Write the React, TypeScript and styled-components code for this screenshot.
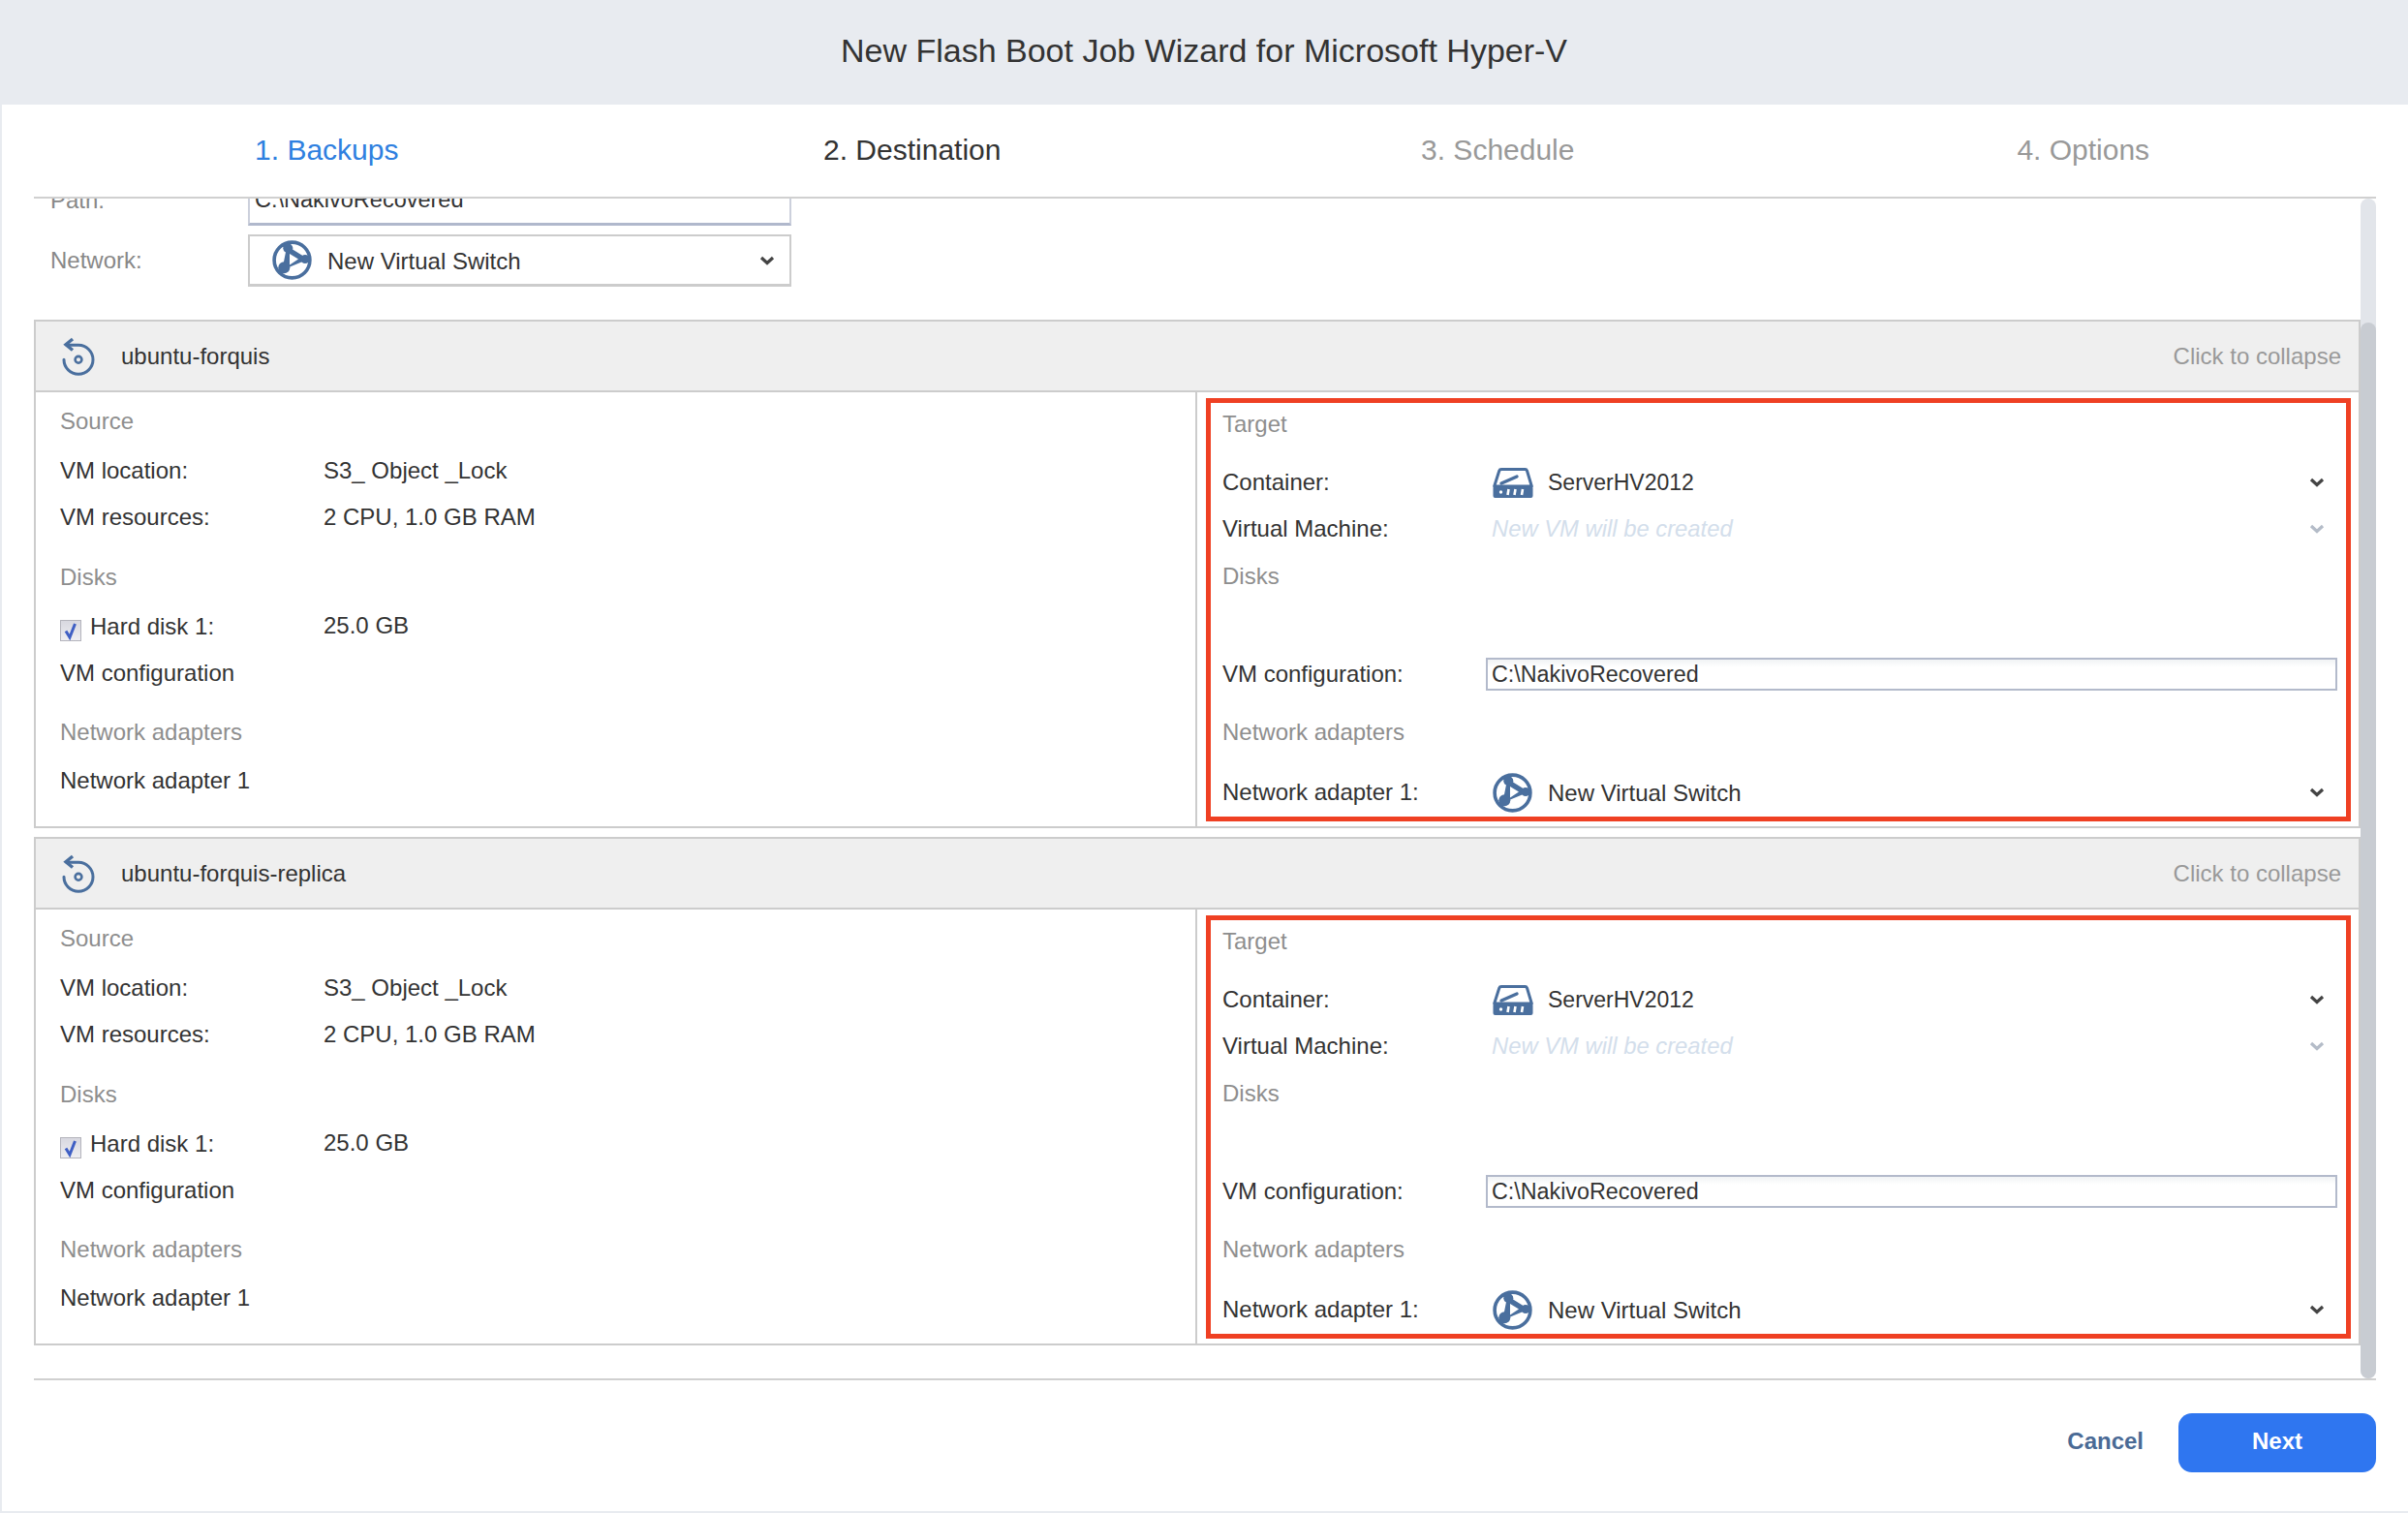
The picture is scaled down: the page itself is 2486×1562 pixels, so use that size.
import React from "react";
import styled, { createGlobalStyle } from "styled-components";

const Global = createGlobalStyle`
  html, body { margin: 0; padding: 0; background: #fff; }
  body { font-family: "Liberation Sans", Arial, sans-serif; color: #333; }
`;

const Page = styled.div`
  width: 2486px;
  height: 1562px;
  box-sizing: border-box;
  display: flex;
  flex-direction: column;
  overflow: hidden;
  border-left: 2px solid #e8ebf0;
  border-bottom: 2px solid #e8ebf0;
  background: #fff;
`;
const TitleBar = styled.header`
  height: 108px;
  margin-left: -2px;
  background: #e8ebf0;
  display: flex;
  align-items: center;
  justify-content: center;
  padding-bottom: 3px;
  box-sizing: border-box;
  font-size: 34px;
  color: #333;
  flex: none;
`;
const Main = styled.div`
  flex: 1;
  display: flex;
  flex-direction: column;
  padding: 0 33px 0 33px;
  min-height: 0;
`;
const Tabs = styled.nav`
  height: 97px;
  flex: none;
  box-sizing: border-box;
  display: grid;
  grid-template-columns: repeat(4, 1fr);
  align-items: center;
  border-bottom: 2px solid #d0d0d0;
`;
const Tab = styled.div<{ $state: "on" | "next" | "off" }>`
  text-align: center;
  font-size: 30px;
  padding-bottom: 1px;
  color: ${(p) => (p.$state === "on" ? "#2f80e0" : p.$state === "next" ? "#333" : "#999")};
`;
const Scroller = styled.div`
  position: relative;
  height: 1218px;
  flex: none;
  overflow: hidden;
  padding-right: 16px;
`;
const ScrollInner = styled.div`
  margin-top: -15px;
`;
const Track = styled.div`
  position: absolute;
  top: 0;
  right: 0;
  bottom: 0;
  width: 16px;
  background: #e2e5ea;
  border-radius: 8px;
`;
const Thumb = styled.div`
  position: absolute;
  top: 128px;
  right: 0;
  bottom: 0;
  width: 16px;
  background: #c8ccd2;
  border-radius: 8px;
`;
const FormRow = styled.div`
  display: grid;
  grid-template-columns: 204px 561px;
  align-items: center;
  padding-left: 17px;
`;
const FormLabel = styled.div<{ $up?: number }>`
  font-size: 24px;
  color: #888;
  margin-top: ${(p) => -(p.$up || 0)}px;
`;
const PathBox = styled.div`
  height: 43px;
  box-sizing: border-box;
  border: 2px solid #ccd0dc;
  border-bottom: 3px solid #b0b8cc;
  padding: 0 0 0 5px;
  font-size: 23.5px;
  line-height: 29px;
  color: #333;
  margin-bottom: 9px;
`;
const SelectBox = styled.div`
  height: 54px;
  box-sizing: border-box;
  border: 2px solid #ccc;
  border-bottom-width: 3px;
  display: flex;
  align-items: center;
  padding: 0 15px 0 23px;
  gap: 16px;
  font-size: 24px;
  margin-bottom: 34px;
`;
const SelectText = styled.span`
  padding-top: 2px;
`;
const Panel = styled.section`
  border: 2px solid #ccc;
  margin-bottom: 9px;
`;
const PanelHead = styled.div`
  box-sizing: border-box;
  background: #efefef;
  border-bottom: 2px solid #ccc;
  height: 73px;
  display: flex;
  align-items: center;
  padding: 0 18px 0 27px;
  font-size: 24px;
  color: #333;
  gap: 25px;
`;
const Collapse = styled.span`
  margin-left: auto;
  color: #999;
`;
const PanelBody = styled.div`
  display: grid;
  grid-template-columns: 1199px 1fr;
  height: 448px;
`;
const SourceCol = styled.div`
  border-right: 2px solid #ccc;
  padding: 6px 0 0 25px;
`;
const TargetCol = styled.div`
  margin: 6px 8px 5px 9px;
  border: 5px solid #ef4023;
  padding-left: 12px;
`;
const Heading = styled.div<{ $mt?: number; $mb?: number; $h?: number }>`
  height: ${(p) => p.$h ?? 48}px;
  display: flex;
  align-items: center;
  font-size: 24px;
  color: #8e8e8e;
  margin-top: ${(p) => p.$mt ?? 0}px;
  margin-bottom: ${(p) => p.$mb ?? 0}px;
`;
const Field = styled.div<{ $mt?: number }>`
  height: 48px;
  display: grid;
  grid-template-columns: 272px 1fr;
  align-items: center;
  font-size: 24px;
  color: #333;
  margin-top: ${(p) => p.$mt ?? 0}px;
  padding-right: 9px;
`;
const DiskLabel = styled.div`
  display: flex;
  align-items: center;
  gap: 9px;
`;
const Check = styled.span`
  width: 22px;
  height: 22px;
  box-sizing: border-box;
  border: 1px solid #b4b4bc;
  background: linear-gradient(180deg, #d8d8e0, #eeeef2);
  margin-top: 8px;
  display: flex;
  align-items: center;
  justify-content: center;
`;
const DiskSize = styled.div`
  margin-top: -3px;
`;
const Value = styled.div`
  display: flex;
  align-items: center;
  gap: 16px;
  padding: 0 13px 0 7px;
  font-size: 24px;
`;
const ValueText = styled.span<{ $narrow?: boolean }>`
  padding-top: 1px;
  font-size: ${(p) => (p.$narrow ? 23 : 24)}px;
  margin-left: ${(p) => (p.$narrow ? -1 : 0)}px;
`;
const Muted = styled.span`
  font-style: italic;
  color: #d3deeb;
  font-size: 23.8px;
  margin-left: -1px;
`;
const TextBox = styled.div`
  height: 34px;
  box-sizing: border-box;
  border: 2px solid #b3bacb;
  background: linear-gradient(180deg, #f1f3f5 0, #fff 8px);
  padding-left: 4px;
  display: flex;
  align-items: center;
  font-size: 23.3px;
`;
const Caret = styled.svg<{ $dim?: boolean }>`
  width: 16px;
  height: 10px;
  margin-left: auto;
  flex: none;
  color: ${(p) => (p.$dim ? "#b4bcc8" : "#444")};
`;
const Footer = styled.footer`
  flex: 1;
  border-top: 2px solid #d0d0d0;
  display: flex;
  justify-content: flex-end;
  align-items: flex-start;
  padding-top: 34px;
  gap: 36px;
`;
const CancelBtn = styled.button`
  border: 0;
  background: none;
  padding: 0 0 3px;
  font: bold 24px "Liberation Sans", Arial, sans-serif;
  color: #4a6a95;
  height: 61px;
`;
const NextBtn = styled.button`
  border: 0;
  width: 204px;
  height: 61px;
  padding: 0 0 3px;
  border-radius: 14px;
  background: #2f76f0;
  color: #fff;
  font: bold 24px "Liberation Sans", Arial, sans-serif;
`;

const Chevron = ({ dim }: { dim?: boolean }) => (
  <Caret $dim={dim} viewBox="0 0 16 10">
    <path d="M2 2l6 5.5L14 2" fill="none" stroke="currentColor" strokeWidth="3.2" />
  </Caret>
);

const SwitchIcon = () => (
  <svg width="41" height="41" viewBox="0 0 41 41" style={{ flex: "none" }}>
    <circle cx="20.5" cy="20.5" r="18.4" fill="none" stroke="#4a6f9e" strokeWidth="3.6" />
    <path d="M16.3 8.3L12.3 28.3L34 19.3Z" fill="#4a6f9e" stroke="#4a6f9e" strokeWidth="3" strokeLinejoin="round" />
    <path d="M16 8L11 4M12 29L8 34M34 19.5H38" stroke="#4a6f9e" strokeWidth="4" />
    <circle cx="16.3" cy="8.3" r="5" fill="#4a6f9e" />
    <circle cx="12.3" cy="28.3" r="6" fill="#4a6f9e" />
    <circle cx="34" cy="19.5" r="4.6" fill="#4a6f9e" />
    <path d="M18 14L18 25.5L27 19.5Z" fill="#fff" />
  </svg>
);

const ServerIcon = () => (
  <svg width="42" height="31" viewBox="0 0 42 31" style={{ flex: "none" }}>
    <path d="M9 1.6H33.5Q35 1.6 35.5 3L40.3 19H1.7L6.8 3Q7.3 1.6 9 1.6Z" fill="none" stroke="#4a6f9e" strokeWidth="3" strokeLinejoin="round" />
    <path d="M9 16L25 9" stroke="#4a6f9e" strokeWidth="3.4" strokeLinecap="round" />
    <rect x="0.5" y="19" width="41" height="12" rx="2" fill="#4a6f9e" />
    <circle cx="8.5" cy="25" r="1.7" fill="#fff" />
    <path d="M16.5 22L15.5 28M23.5 22L22.5 28M31 22L30 28" stroke="#fff" strokeWidth="2.6" />
  </svg>
);

const RestoreIcon = () => (
  <svg width="36" height="40" viewBox="0 0 36 40" style={{ flex: "none" }}>
    <path d="M2 23.3A15 15 0 1 0 17 8.3H5" fill="none" stroke="#4a6f9e" strokeWidth="3" strokeLinecap="round" />
    <path d="M11 2L4 7.8L11 13.5" fill="none" stroke="#4a6f9e" strokeWidth="3.4" />
    <circle cx="17" cy="23.3" r="3.4" fill="none" stroke="#4a6f9e" strokeWidth="2.6" />
  </svg>
);

const CheckMark = () => (
  <svg width="18" height="20" viewBox="0 0 18 20">
    <path d="M4 10.5L8 17L13.5 3" fill="none" stroke="#3f5fc4" strokeWidth="3" />
  </svg>
);

const VmPanel = ({ name }: { name: string }) => (
  <Panel>
    <PanelHead>
      <RestoreIcon />
      <span>{name}</span>
      <Collapse>Click to collapse</Collapse>
    </PanelHead>
    <PanelBody>
      <SourceCol>
        <Heading $mb={3}>Source</Heading>
        <Field><span>VM location:</span><span>S3_ Object _Lock</span></Field>
        <Field><span>VM resources:</span><span>2 CPU, 1.0 GB RAM</span></Field>
        <Heading $mt={14} $mb={3}>Disks</Heading>
        <Field>
          <DiskLabel><Check><CheckMark /></Check>Hard disk 1:</DiskLabel>
          <DiskSize>25.0 GB</DiskSize>
        </Field>
        <Field><span>VM configuration</span></Field>
        <Heading $mt={13} $mb={2}>Network adapters</Heading>
        <Field><span>Network adapter 1</span></Field>
      </SourceCol>
      <TargetCol>
        <Heading $h={44}>Target</Heading>
        <Field $mt={14}>
          <span>Container:</span>
          <Value><ServerIcon /><ValueText $narrow>ServerHV2012</ValueText><Chevron /></Value>
        </Field>
        <Field>
          <span>Virtual Machine:</span>
          <Value><Muted>New VM will be created</Muted><Chevron dim /></Value>
        </Field>
        <Heading $mt={1}>Disks</Heading>
        <Field $mt={53}>
          <span>VM configuration:</span>
          <TextBox>C:\NakivoRecovered</TextBox>
        </Field>
        <Heading $mt={12}>Network adapters</Heading>
        <Field $mt={14}>
          <span>Network adapter 1:</span>
          <Value><SwitchIcon /><ValueText>New Virtual Switch</ValueText><Chevron /></Value>
        </Field>
      </TargetCol>
    </PanelBody>
  </Panel>
);

export default function App() {
  return (
    <Page>
      <Global />
      <TitleBar>New Flash Boot Job Wizard for Microsoft Hyper-V</TitleBar>
      <Main>
        <Tabs>
          <Tab $state="on">1. Backups</Tab>
          <Tab $state="next">2. Destination</Tab>
          <Tab $state="off">3. Schedule</Tab>
          <Tab $state="off">4. Options</Tab>
        </Tabs>
        <Scroller>
          <ScrollInner>
            <FormRow>
              <FormLabel $up={19}>Path:</FormLabel>
              <PathBox>C:\NakivoRecovered</PathBox>
            </FormRow>
            <FormRow>
              <FormLabel $up={34}>Network:</FormLabel>
              <SelectBox>
                <SwitchIcon />
                <SelectText>New Virtual Switch</SelectText>
                <Chevron />
              </SelectBox>
            </FormRow>
            <VmPanel name="ubuntu-forquis" />
            <VmPanel name="ubuntu-forquis-replica" />
          </ScrollInner>
          <Track />
          <Thumb />
        </Scroller>
        <Footer>
          <CancelBtn>Cancel</CancelBtn>
          <NextBtn>Next</NextBtn>
        </Footer>
      </Main>
    </Page>
  );
}
